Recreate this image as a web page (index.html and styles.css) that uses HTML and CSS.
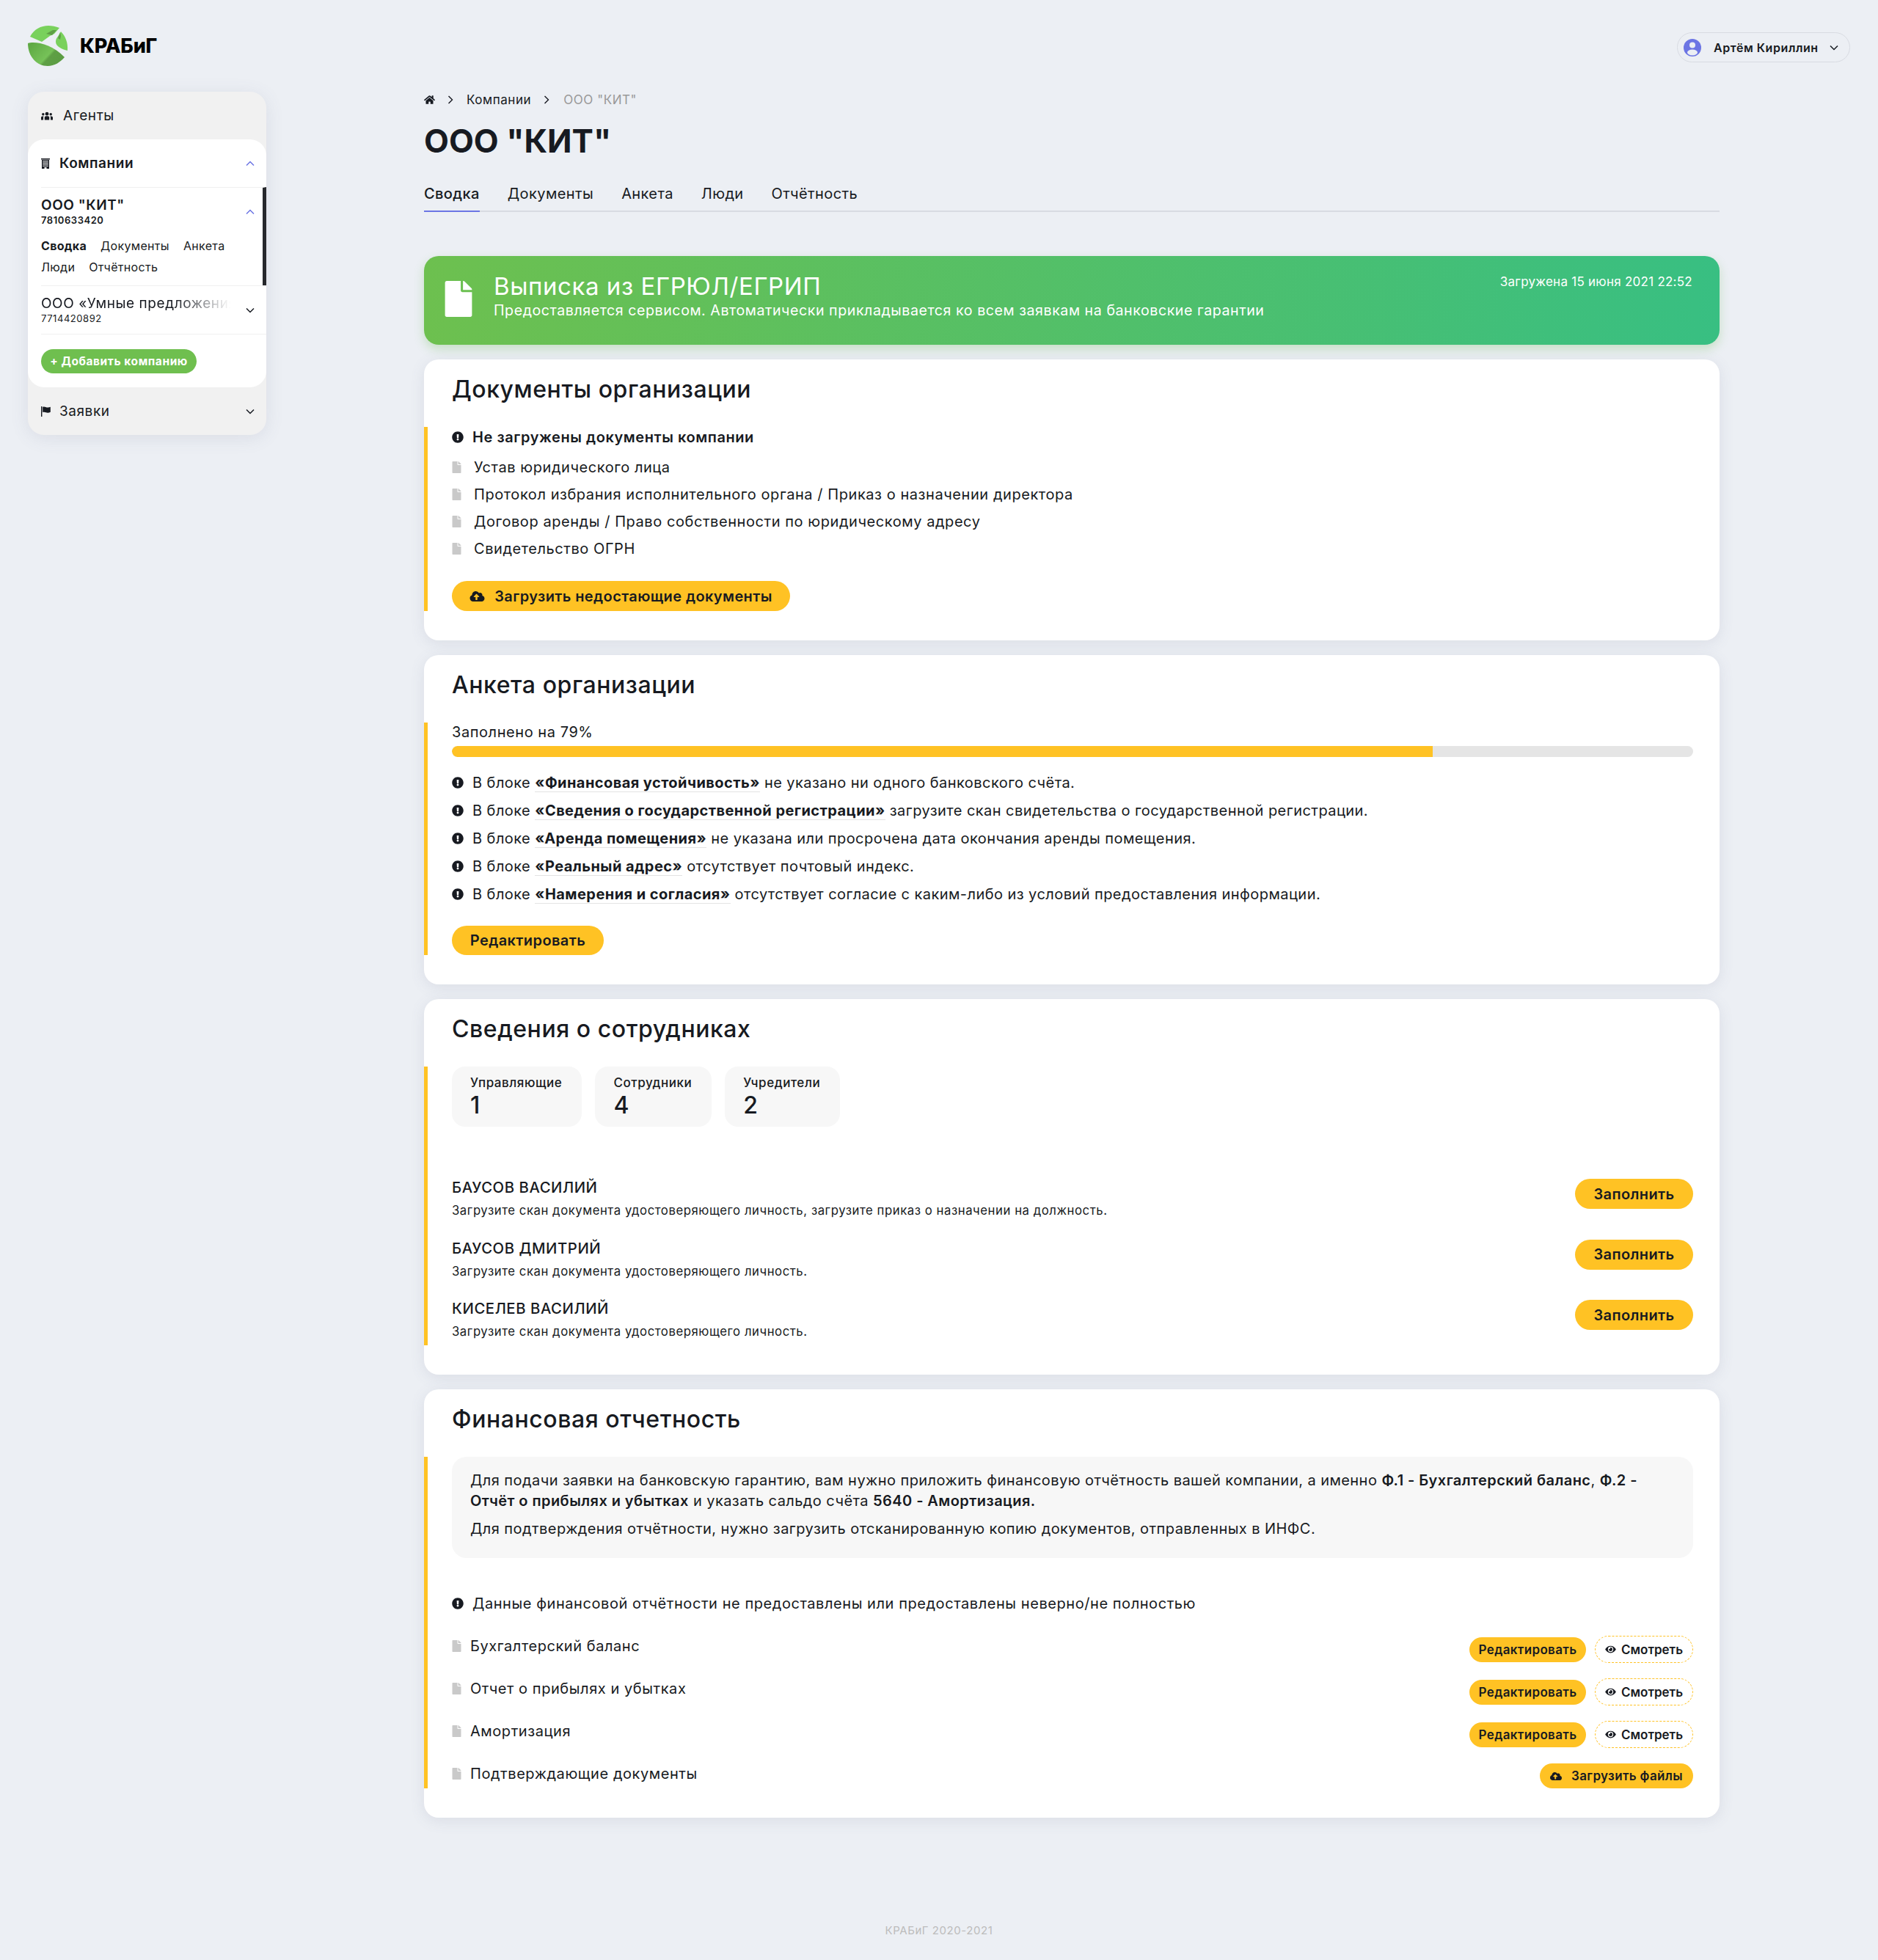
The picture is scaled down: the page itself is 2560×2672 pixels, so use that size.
FILE: index.html
```html
<!DOCTYPE html>
<html lang="ru">

<head>
    <meta charset="UTF-8">
    <meta name="viewport" content="width=device-width, initial-scale=1.0">
    <title>ООО "КИТ"</title>
    <link rel="stylesheet" href="styles.css">
</head>

<body>

    <svg class="sprite" xmlns="http://www.w3.org/2000/svg">
        <defs>
            <linearGradient id="leafGrad" x1="0" y1="0.2" x2="1" y2="0.8">
                <stop offset="0" stop-color="#5fa944"/>
                <stop offset="0.55" stop-color="#76c258"/>
                <stop offset="0.62" stop-color="#5e9f45"/>
                <stop offset="1" stop-color="#5b9c42"/>
            </linearGradient>
        </defs>
        <symbol id="i-alert" viewBox="0 0 512 512"><path d="M504 256c0 136.997-111.043 248-248 248S8 392.997 8 256C8 119.083 119.043 8 256 8s248 111.083 248 248zm-248 50c-25.405 0-46 20.595-46 46s20.595 46 46 46 46-20.595 46-46-20.595-46-46-46zm-43.673-165.346l7.418 136c.347 6.364 5.609 11.346 11.982 11.346h48.546c6.373 0 11.635-4.982 11.982-11.346l7.418-136c.375-6.874-5.098-12.654-11.982-12.654h-63.383c-6.884 0-12.356 5.78-11.981 12.654z"/></symbol>
        <symbol id="i-file" viewBox="0 0 384 512"><path d="M224 136V0H24C10.7 0 0 10.7 0 24v464c0 13.3 10.7 24 24 24h336c13.3 0 24-10.7 24-24V160H248c-13.2 0-24-10.8-24-24zm160-14.1v6.1H256V0h6.1c6.4 0 12.5 2.5 17 7l97.9 98c4.5 4.5 7 10.6 7 16.9z"/></symbol>
        <symbol id="i-cloud" viewBox="0 0 640 512"><path d="M537.6 226.6c4.1-10.7 6.4-22.4 6.4-34.6 0-53-43-96-96-96-19.7 0-38.1 6-53.3 16.2C367 64.2 315.3 32 256 32c-88.4 0-160 71.6-160 160 0 2.7.1 5.4.2 8.1C40.2 219.8 0 273.2 0 336c0 79.5 64.5 144 144 144h368c70.7 0 128-57.3 128-128 0-61.9-44-113.6-102.4-125.4zM393.4 288H328v112c0 8.8-7.2 16-16 16h-48c-8.8 0-16-7.2-16-16V288h-65.4c-14.3 0-21.4-17.2-11.3-27.3l105.4-105.4c6.2-6.2 16.4-6.2 22.6 0l105.4 105.4c10.1 10.1 2.9 27.3-11.3 27.3z"/></symbol>
        <symbol id="i-eye" viewBox="0 0 576 512"><path d="M572.52 241.4C518.29 135.59 410.93 64 288 64S57.68 135.64 3.48 241.41a32.35 32.35 0 0 0 0 29.19C57.71 376.41 165.07 448 288 448s230.32-71.64 284.52-177.41a32.35 32.35 0 0 0 0-29.19zM288 400a144 144 0 1 1 144-144 143.93 143.93 0 0 1-144 144zm0-240a95.31 95.31 0 0 0-25.31 3.79 47.85 47.85 0 0 1-66.9 66.9A95.78 95.78 0 1 0 288 160z"/></symbol>
        <symbol id="i-home" viewBox="0 0 576 512"><path d="M280.37 148.26L96 300.11V464a16 16 0 0 0 16 16l112.06-.29a16 16 0 0 0 15.92-16V368a16 16 0 0 1 16-16h64a16 16 0 0 1 16 16v95.64a16 16 0 0 0 16 16.05L464 480a16 16 0 0 0 16-16V300L295.67 148.26a12.19 12.19 0 0 0-15.3 0zM571.6 251.47L488 182.56V44.05a12 12 0 0 0-12-12h-56a12 12 0 0 0-12 12v72.61L318.47 43a48 48 0 0 0-61 0L4.34 251.47a12 12 0 0 0-1.6 16.9l25.5 31A12 12 0 0 0 45.15 301l235.22-193.74a12.19 12.19 0 0 1 15.3 0L530.9 301a12 12 0 0 0 16.9-1.6l25.5-31a12 12 0 0 0-1.7-16.93z"/></symbol>
        <symbol id="i-building" viewBox="0 0 12 14"><path d="M0 0h12v1.5H0zM1 2h10v12H7.5v-2h-3v2H1zm1.2 1.2v1h7.6v-1zm0 2.2v1h7.6v-1zm0 2.2v1h7.6v-1zm0 2.2v1h7.6v-1z" fill-rule="evenodd"/></symbol>
        <symbol id="i-flag" viewBox="0 0 13 14"><path d="M0 0h1.4v14H0zM2.2 .8c3-1 4.700 1 7 .8 1.200-.1 2.500-.5 3.600-.9v7c-1.200.6-2.400 1-3.600 1-2.300.1-4-1.700-7-.7z"/></symbol>
        <symbol id="i-users" viewBox="0 0 16 12"><circle cx="8" cy="3.200" r="2.400"/><path d="M4.800 11.500V8.300c0-1.300 1-2.100 2-2.100h2.400c1 0 2 .8 2 2.100v3.200z"/><circle cx="2.800" cy="3.800" r="1.700"/><path d="M0 11.500V8.500c0-1 .7-1.900 1.800-1.900h1.900c-.5.500-.7 1.100-.7 1.800v3.100z"/><circle cx="13.200" cy="3.800" r="1.700"/><path d="M16 11.500V8.500c0-1-.7-1.900-1.800-1.900h-1.900c.5.500.7 1.100.7 1.800v3.100z"/></symbol>
        <symbol id="i-down" viewBox="0 0 12 8"><path d="M1 1.500l5 5 5-5" fill="none" stroke="currentColor" stroke-width="1.500"/></symbol>
        <symbol id="i-right" viewBox="0 0 8 12"><path d="M1.500 1l5 5-5 5" fill="none" stroke="currentColor" stroke-width="1.400"/></symbol>
    </svg>

    <header class="topbar">
        <a class="logo">
            <svg class="logo-mark" viewBox="0 0 55 55">
                <path d="M0 24C10 21 33 25 50 43 44 50 36 55 27 55 12 55 0 42 0 24z" fill="url(#leafGrad)"/>
                <path d="M3 15C8 5 18 0 28 0c5 0 10 1 15 3l-7 8-6 3-11 8z" fill="#79d15c"/>
                <path d="M25 11l9-5 5 0-6 7z" fill="#5f9f46"/>
                <path d="M45 8c6 6 10 15 9 26-8-2-16-6-16-12 0-3 1-5 2-6l2-3z" fill="#79d15c"/>
                <path d="M41 17l3-8 1 5-1 5z" fill="#5f9f46"/>
            </svg>
            <span class="logo-text">КРАБиГ</span>
        </a>
        <div class="user-pill">
            <svg class="user-icon" viewBox="0 0 24 24">
                <circle cx="12" cy="12" r="12" fill="#6c75e4"/>
                <circle cx="12" cy="8.500" r="4" fill="#eceff4"/>
                <ellipse cx="12" cy="18.500" rx="7" ry="4" fill="#eceff4"/>
            </svg>
            <span class="user-name">Артём Кириллин</span>
            <svg class="chev"><use href="#i-down"/></svg>
        </div>
    </header>

    <div class="page">
        <aside class="sidebar">
            <div class="side-row side-agents">
                <svg class="side-icon users"><use href="#i-users"/></svg>
                <span>Агенты</span>
            </div>
            <div class="side-panel">
                <div class="side-row side-head">
                    <svg class="side-icon building"><use href="#i-building"/></svg>
                    <b>Компании</b>
                    <svg class="chev up"><use href="#i-down"/></svg>
                </div>
                <div class="company active">
                    <div class="company-top">
                        <div>
                            <div class="company-name">ООО "КИТ"</div>
                            <div class="company-inn">7810633420</div>
                        </div>
                        <svg class="chev up"><use href="#i-down"/></svg>
                    </div>
                    <div class="company-links">
                        <a class="current">Сводка</a>
                        <a>Документы</a>
                        <a>Анкета</a>
                        <a>Люди</a>
                        <a>Отчётность</a>
                    </div>
                </div>
                <div class="company">
                    <div class="company-top">
                        <div>
                            <div class="company-name fade">ООО «Умные предложения»</div>
                            <div class="company-inn">7714420892</div>
                        </div>
                        <svg class="chev"><use href="#i-down"/></svg>
                    </div>
                </div>
                <div class="add-wrap">
                    <a class="btn-add">+ Добавить компанию</a>
                </div>
            </div>
            <div class="side-row side-orders">
                <svg class="side-icon flag"><use href="#i-flag"/></svg>
                <span>Заявки</span>
                <svg class="chev"><use href="#i-down"/></svg>
            </div>
        </aside>

        <main class="content">
            <nav class="crumbs">
                <svg class="home"><use href="#i-home"/></svg>
                <svg class="sep first"><use href="#i-right"/></svg>
                <a>Компании</a>
                <svg class="sep"><use href="#i-right"/></svg>
                <span class="muted">ООО "КИТ"</span>
            </nav>
            <h1>ООО "КИТ"</h1>
            <div class="tabs">
                <a class="tab active">Сводка</a>
                <a class="tab">Документы</a>
                <a class="tab">Анкета</a>
                <a class="tab">Люди</a>
                <a class="tab">Отчётность</a>
            </div>

            <section class="banner">
                <svg class="banner-icon"><use href="#i-file"/></svg>
                <div class="banner-body">
                    <div class="banner-title">Выписка из ЕГРЮЛ/ЕГРИП</div>
                    <div class="banner-sub">Предоставляется сервисом. Автоматически прикладывается ко всем заявкам на банковские гарантии</div>
                </div>
                <div class="banner-date">Загружена 15 июня 2021 22:52</div>
            </section>

            <section class="card">
                <h2>Документы организации</h2>
                <div class="block docs">
                    <div class="alert strong"><svg class="ic-alert"><use href="#i-alert"/></svg>Не загружены документы компании</div>
                    <ul class="file-list">
                        <li><svg class="ic-file"><use href="#i-file"/></svg>Устав юридического лица</li>
                        <li><svg class="ic-file"><use href="#i-file"/></svg>Протокол избрания исполнительного органа / Приказ о назначении директора</li>
                        <li><svg class="ic-file"><use href="#i-file"/></svg>Договор аренды / Право собственности по юридическому адресу</li>
                        <li><svg class="ic-file"><use href="#i-file"/></svg>Свидетельство ОГРН</li>
                    </ul>
                    <a class="btn btn-upload"><svg class="ic-cloud"><use href="#i-cloud"/></svg>Загрузить недостающие документы</a>
                </div>
            </section>

            <section class="card">
                <h2>Анкета организации</h2>
                <div class="block form-block">
                    <div class="progress-label">Заполнено на 79%</div>
                    <div class="progress"><div class="progress-fill" style="width: 79%"></div></div>
                    <ul class="issues">
                        <li><svg class="ic-alert"><use href="#i-alert"/></svg><span>В блоке <a>«Финансовая устойчивость»</a> не указано ни одного банковского счёта.</span></li>
                        <li><svg class="ic-alert"><use href="#i-alert"/></svg><span>В блоке <a>«Сведения о государственной регистрации»</a> загрузите скан свидетельства о государственной регистрации.</span></li>
                        <li><svg class="ic-alert"><use href="#i-alert"/></svg><span>В блоке <a>«Аренда помещения»</a> не указана или просрочена дата окончания аренды помещения.</span></li>
                        <li><svg class="ic-alert"><use href="#i-alert"/></svg><span>В блоке <a>«Реальный адрес»</a> отсутствует почтовый индекс.</span></li>
                        <li><svg class="ic-alert"><use href="#i-alert"/></svg><span>В блоке <a>«Намерения и согласия»</a> отсутствует согласие с каким-либо из условий предоставления информации.</span></li>
                    </ul>
                    <a class="btn btn-edit">Редактировать</a>
                </div>
            </section>

            <section class="card">
                <h2>Сведения о сотрудниках</h2>
                <div class="block people">
                    <div class="stats">
                        <div class="stat"><div class="stat-label">Управляющие</div><div class="stat-value">1</div></div>
                        <div class="stat"><div class="stat-label">Сотрудники</div><div class="stat-value">4</div></div>
                        <div class="stat"><div class="stat-label">Учредители</div><div class="stat-value">2</div></div>
                    </div>
                    <div class="person">
                        <div>
                            <div class="person-name">БАУСОВ ВАСИЛИЙ</div>
                            <div class="person-note">Загрузите скан документа удостоверяющего личность, загрузите приказ о назначении на должность.</div>
                        </div>
                        <a class="btn btn-fill">Заполнить</a>
                    </div>
                    <div class="person">
                        <div>
                            <div class="person-name">БАУСОВ ДМИТРИЙ</div>
                            <div class="person-note">Загрузите скан документа удостоверяющего личность.</div>
                        </div>
                        <a class="btn btn-fill">Заполнить</a>
                    </div>
                    <div class="person">
                        <div>
                            <div class="person-name">КИСЕЛЕВ ВАСИЛИЙ</div>
                            <div class="person-note">Загрузите скан документа удостоверяющего личность.</div>
                        </div>
                        <a class="btn btn-fill">Заполнить</a>
                    </div>
                </div>
            </section>

            <section class="card">
                <h2>Финансовая отчетность</h2>
                <div class="block finance">
                    <div class="note">
                        <p>Для подачи заявки на банковскую гарантию, вам нужно приложить финансовую отчётность вашей компании, а именно <b>Ф.1 - Бухгалтерский баланс</b>, <b>Ф.2 - Отчёт о прибылях и убытках</b> и указать сальдо счёта <b>5640 - Амортизация.</b></p>
                        <p>Для подтверждения отчётности, нужно загрузить отсканированную копию документов, отправленных в ИНФС.</p>
                    </div>
                    <div class="alert"><svg class="ic-alert"><use href="#i-alert"/></svg>Данные финансовой отчётности не предоставлены или предоставлены неверно/не полностью</div>
                    <div class="report">
                        <div class="report-name"><svg class="ic-file"><use href="#i-file"/></svg>Бухгалтерский баланс</div>
                        <div class="report-actions"><a class="btn btn-sm">Редактировать</a><a class="btn btn-view"><svg class="ic-eye"><use href="#i-eye"/></svg>Смотреть</a></div>
                    </div>
                    <div class="report">
                        <div class="report-name"><svg class="ic-file"><use href="#i-file"/></svg>Отчет о прибылях и убытках</div>
                        <div class="report-actions"><a class="btn btn-sm">Редактировать</a><a class="btn btn-view"><svg class="ic-eye"><use href="#i-eye"/></svg>Смотреть</a></div>
                    </div>
                    <div class="report">
                        <div class="report-name"><svg class="ic-file"><use href="#i-file"/></svg>Амортизация</div>
                        <div class="report-actions"><a class="btn btn-sm">Редактировать</a><a class="btn btn-view"><svg class="ic-eye"><use href="#i-eye"/></svg>Смотреть</a></div>
                    </div>
                    <div class="report last">
                        <div class="report-name"><svg class="ic-file"><use href="#i-file"/></svg>Подтверждающие документы</div>
                        <div class="report-actions"><a class="btn btn-files"><svg class="ic-cloud"><use href="#i-cloud"/></svg>Загрузить файлы</a></div>
                    </div>
                </div>
            </section>
        </main>
    </div>

    <footer class="footer">КРАБиГ 2020-2021</footer>

</body>

</html>
```

FILE: styles.css
```css
* {
    box-sizing: border-box;
}

body {
    margin: 0;
    height: 2672px;
    background: #eceff4;
    color: #171a21;
    font-family: Inter, "Noto Sans", sans-serif;
    font-size: 20px;
    letter-spacing: 0.028em;
    position: relative;
    overflow: hidden;
}

b {
    font-weight: 700;
}

ul {
    list-style: none;
    margin: 0;
    padding: 0;
}

.sprite {
    position: absolute;
    width: 0;
    height: 0;
}

svg {
    fill: currentColor;
    flex: none;
}

/* top bar */
.topbar {
    height: 125px;
    padding: 35px 38px 0;
    display: flex;
    justify-content: space-between;
    align-items: flex-start;
}

.logo {
    display: flex;
    align-items: center;
    gap: 16px;
}

.logo-mark {
    width: 55px;
    height: 55px;
}

.logo-text {
    color: #000;
    font-size: 27px;
    font-weight: 800;
    letter-spacing: -0.2px;
}

.user-pill {
    display: flex;
    align-items: center;
    width: 236px;
    height: 41px;
    margin-top: 9px;
    padding-left: 8px;
    border: 1.5px solid #d8dbe2;
    border-radius: 21px;
}

.user-icon {
    width: 24px;
    height: 24px;
}

.user-name {
    margin-left: 17px;
    font-size: 16px;
    font-weight: 600;
    white-space: nowrap;
}

.user-pill .chev {
    margin-left: auto;
    margin-right: 15px;
}

.chev {
    width: 12px;
    height: 8px;
    color: #171a21;
}

.chev.up {
    color: #6c75e4;
    transform: rotate(180deg);
}

/* page columns */
.page {
    display: flex;
    align-items: flex-start;
    padding-left: 38px;
}

.sidebar {
    width: 325px;
    flex: none;
    background: #f1f1f1;
    border-radius: 22px;
    box-shadow: 0 4px 24px rgba(90, 100, 130, 0.12);
}

.content {
    width: 1766px;
    margin-left: 215px;
}

/* sidebar */
.side-row {
    display: flex;
    align-items: center;
    padding: 0 16px 0 18px;
    font-size: 19px;
}

.side-agents {
    height: 65px;
}

.side-orders {
    height: 65px;
}

.side-orders .chev,
.side-head .chev {
    margin-left: auto;
}

.side-icon {
    margin-right: 13px;
}

.users {
    width: 16px;
    height: 12px;
    margin-right: 14px;
}

.building {
    width: 12px;
    height: 14px;
}

.flag {
    width: 13px;
    height: 14px;
    margin-right: 12px;
}

.side-panel {
    background: #fff;
    border-radius: 22px;
}

.side-head {
    height: 65px;
}

.side-head b {
    font-weight: 600;
}

.company {
    margin-left: 18px;
    border-top: 1.5px solid #f0f0f0;
    padding-right: 16px;
}

.company.active {
    height: 134px;
    border-right: 5px solid #26282c;
    padding-right: 11px;
}

.company-top {
    display: flex;
    align-items: center;
    justify-content: space-between;
    height: 65px;
}

.company-name {
    font-size: 19px;
    line-height: 24px;
    width: 258px;
    white-space: nowrap;
    overflow: hidden;
}

.active .company-name {
    font-weight: 600;
}

.company-name.fade {
    -webkit-mask-image: linear-gradient(to right, #000 70%, transparent 100%);
    mask-image: linear-gradient(to right, #000 70%, transparent 100%);
}

.company-inn {
    font-size: 13px;
    line-height: 17px;
}

.active .company-inn {
    font-weight: 600;
}

.company-links {
    display: flex;
    flex-wrap: wrap;
    gap: 8px 19px;
    font-size: 16px;
    letter-spacing: 0.02em;
    line-height: 21px;
    margin-top: 4px;
}

.company-links .current {
    font-weight: 700;
}

.add-wrap {
    margin-left: 18px;
    padding: 20px 0 19px;
    border-top: 1.5px solid #f0f0f0;
}

.btn-add {
    display: inline-block;
    width: 212px;
    height: 33px;
    border-radius: 17px;
    background: #6fbf4f;
    color: #fff;
    font-size: 15.5px;
    font-weight: 700;
    line-height: 33px;
    text-align: center;
    white-space: nowrap;
}

/* breadcrumbs, title, tabs */
.crumbs {
    display: flex;
    align-items: center;
    height: 22px;
    font-size: 17px;
}

.home {
    width: 15px;
    height: 14px;
}

.sep {
    width: 8px;
    height: 12px;
    margin: 0 19px 0 17px;
}

.sep.first {
    margin-right: 18px;
}

.muted {
    color: #999;
}

h1 {
    margin: 18px 0 0;
    font-size: 44px;
    line-height: 54px;
    font-weight: 700;
    letter-spacing: 0;
}

.tabs {
    display: flex;
    gap: 38px;
    height: 43px;
    margin-top: 27px;
    border-bottom: 2px solid #d8dbe2;
    letter-spacing: 0.02em;
}

.tab {
    height: 43px;
    font-size: 20px;
    line-height: 36px;
}

.tab.active {
    font-weight: 500;
    border-bottom: 2px solid #6c75e4;
}

/* banner */
.banner {
    display: flex;
    align-items: flex-start;
    height: 121px;
    margin-top: 60px;
    padding: 0 37px 0 28px;
    border-radius: 20px;
    background: linear-gradient(90deg, #6dc04f, #38bf82);
    box-shadow: 0 6px 14px rgba(110, 190, 90, 0.3);
    color: #fff;
}

.banner-icon {
    width: 38px;
    height: 49px;
    margin-top: 34px;
}

.banner-body {
    margin-left: 29px;
    padding-top: 21px;
}

.banner-title {
    font-size: 33px;
    line-height: 40px;
}

.banner-sub {
    font-size: 19.6px;
    line-height: 26px;
}

.banner-date {
    margin-left: auto;
    padding-top: 23px;
    font-size: 17px;
    letter-spacing: 0.015em;
    line-height: 24px;
}

/* cards */
.card {
    margin-top: 20px;
    padding-bottom: 40px;
    background: #fff;
    border-radius: 20px;
    box-shadow: 0 4px 20px rgba(90, 100, 130, 0.12);
}

.card h2 {
    margin: 0;
    padding: 23px 38px 33px;
    font-size: 32px;
    line-height: 36px;
    font-weight: 500;
}

.block {
    margin-right: 36px;
    padding-left: 33px;
    border-left: 5px solid #ffc224;
}

.ic-alert {
    width: 16px;
    height: 16px;
    margin-right: 12px;
}

.ic-file {
    width: 13px;
    height: 16px;
    fill: #c9c9c9;
    margin-right: 17px;
}

.ic-cloud {
    width: 21px;
    height: 16px;
    margin-right: 13px;
}

.alert {
    display: flex;
    align-items: center;
    height: 28px;
    line-height: 28px;
}

.alert.strong {
    font-weight: 600;
    margin-bottom: 8px;
}

.file-list li {
    display: flex;
    align-items: center;
    height: 37px;
}

/* buttons */
.btn {
    display: inline-flex;
    align-items: center;
    justify-content: center;
    background: #ffc224;
    border-radius: 22px;
    font-weight: 600;
    letter-spacing: 0.02em;
    white-space: nowrap;
}

.btn-upload {
    width: 461px;
    height: 41px;
    margin-top: 26px;
    font-size: 20px;
}

.btn-edit {
    width: 207px;
    height: 40px;
    margin-top: 24px;
    font-size: 20px;
}

.btn-fill {
    width: 161px;
    height: 41px;
    margin-top: 2px;
    font-size: 20px;
}

.btn-sm {
    width: 159px;
    height: 34px;
    margin-top: 2px;
    font-size: 17px;
}

.btn-view {
    width: 134px;
    height: 37px;
    margin-left: 12px;
    background: #fff;
    border: 1.5px dashed #ffc224;
    font-size: 17px;
    letter-spacing: 0;
}

.ic-eye {
    width: 15px;
    height: 13px;
    margin-right: 7px;
}

.btn-files {
    width: 209px;
    height: 34px;
    font-size: 17px;
}

.btn-files .ic-cloud {
    width: 16px;
    height: 13px;
    margin-right: 13px;
}

/* questionnaire */
.progress-label {
    height: 26px;
    line-height: 26px;
}

.progress {
    height: 15px;
    margin-top: 6px;
    background: #e5e5e5;
    border-radius: 8px;
    overflow: hidden;
}

.progress-fill {
    height: 100%;
    background: #ffc224;
    border-radius: 8px 0 0 8px;
}

.issues {
    margin-top: 16px;
    letter-spacing: 0.022em;
}

.issues li {
    display: flex;
    align-items: center;
    height: 38px;
}

.issues a {
    font-weight: 700;
    border-bottom: 1.5px solid #e3e3e3;
}

/* employees */
.people {
    padding-bottom: 8px;
}

.stats {
    display: flex;
    gap: 18px;
    margin-bottom: 69px;
}

.stat {
    height: 82px;
    padding: 11px 27px 0 25px;
    background: #f7f7f7;
    border-radius: 18px;
}

.stat-label {
    font-size: 17px;
    line-height: 22px;
    font-weight: 500;
}

.stat-value {
    margin-top: 1px;
    font-size: 32px;
    line-height: 38px;
    font-weight: 500;
}

.person {
    display: flex;
    justify-content: space-between;
    align-items: flex-start;
    height: 56px;
}

.person + .person {
    margin-top: 26.5px;
}

.person-name {
    font-size: 20.3px;
    line-height: 28px;
    font-weight: 500;
}

.person-note {
    margin-top: 6px;
    font-size: 16.7px;
    line-height: 22px;
}

/* finance */
.note {
    height: 138px;
    padding: 18px 25px;
    background: #f7f7f7;
    border-radius: 20px;
    margin-bottom: 48px;
    letter-spacing: 0.022em;
    line-height: 28px;
}

.note p {
    margin: 0 0 10px;
}

.note b {
    font-weight: 600;
}

.finance .alert {
    margin-bottom: 30px;
}

.report {
    display: flex;
    justify-content: space-between;
    align-items: flex-start;
    height: 58px;
}

.report.last {
    height: 34px;
}

.report-name {
    display: flex;
    align-items: center;
    height: 28px;
}

.report-name .ic-file {
    margin-right: 12px;
}

.report-actions {
    display: flex;
    align-items: flex-start;
}

/* footer */
.footer {
    position: absolute;
    left: 0;
    right: 0;
    bottom: 27px;
    text-align: center;
    color: #bcbcbc;
    font-size: 15px;
    line-height: 26px;
}
```
